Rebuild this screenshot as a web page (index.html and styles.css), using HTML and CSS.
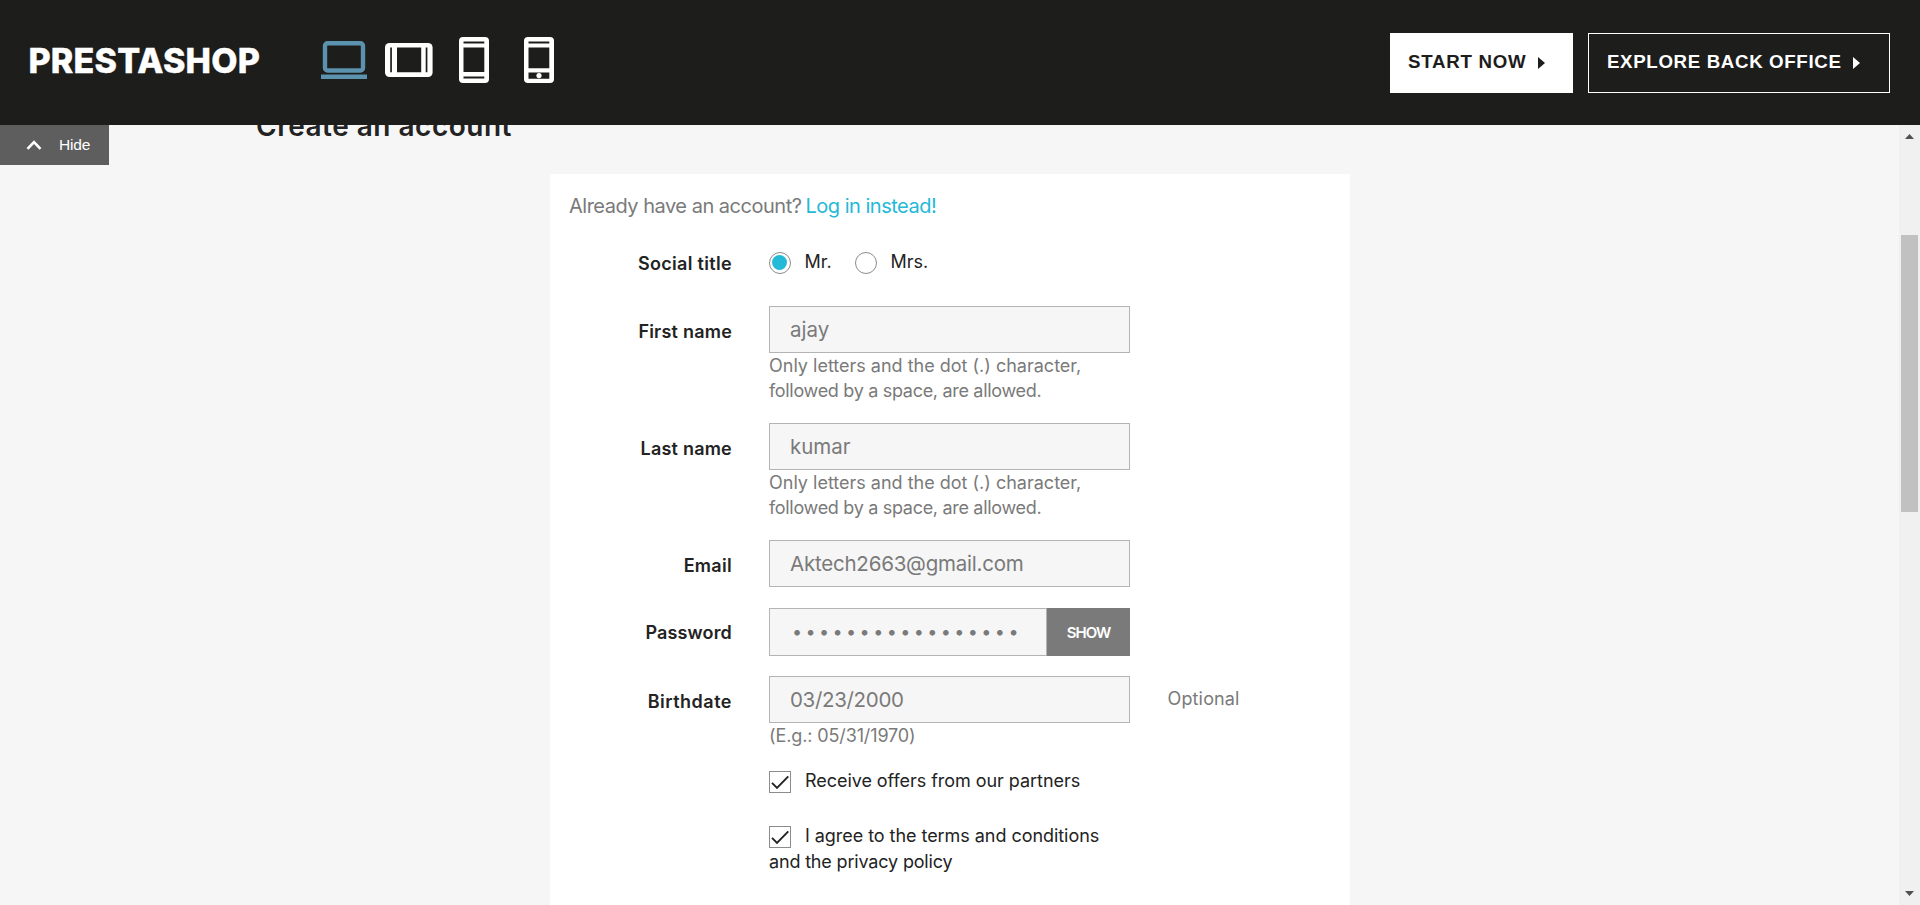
FILE: index.html
```html
<!DOCTYPE html>
<html lang="en">
<head>
<meta charset="utf-8">
<title>PrestaShop Demo</title>
<link rel="stylesheet" href="styles.css">
</head>
<body>
<header class="topbar">
  <div class="logo"><span>PRESTASHOP</span></div>
  <nav class="devices">
    <svg class="laptop" width="46" height="38" viewBox="0 0 46 38"><rect x="4" y="2.2" width="38" height="27.3" rx="2.5" fill="none" stroke="#5b93ae" stroke-width="4.4"/><path d="M0 33.4H46V38H0z" fill="#5b93ae"/></svg>
    <svg class="tablet" width="48" height="34" viewBox="0 0 48 34"><rect width="47.6" height="34" rx="4.5" fill="#fff"/><path d="M12 4.5H36.2V29.3H12zM5.2 4.5H6.9V29.3H5.2zM40.7 4.5H42.4V29.3H40.7z" fill="#1d1d1b"/></svg>
    <svg class="phone" width="30" height="46" viewBox="0 0 30 46"><rect width="30" height="46" rx="4" fill="#fff"/><path d="M4.5 4.5H25.3V6.4H4.5zM4.5 10.5H25.3V35H4.5zM4.5 39.6H25.3V41.5H4.5z" fill="#1d1d1b"/></svg>
    <svg class="phone" width="30" height="46" viewBox="0 0 30 46"><rect width="30" height="46" rx="4" fill="#fff"/><path d="M4.5 4.5H25.3V6.4H4.5zM4.5 10.5H25.3V31.2H4.5zM4.5 35.6H25.3V41.7H4.5z" fill="#1d1d1b"/><circle cx="15" cy="38.6" r="2.6" fill="#fff"/></svg>
  </nav>
  <div class="actions">
    <a class="btn btn-start"><span>START NOW</span><svg width="7" height="12" viewBox="0 0 7 12"><path d="M0 0L7 6L0 12z" fill="#1d1d1b"/></svg></a>
    <a class="btn btn-explore"><span>EXPLORE BACK OFFICE</span><svg width="7" height="12" viewBox="0 0 7 12"><path d="M0 0L7 6L0 12z" fill="#fff"/></svg></a>
  </div>
</header>
<div class="viewport">
  <div class="hide"><svg width="16" height="10" viewBox="0 0 16 10"><path d="M1.5 8.8L8 2.2L14.5 8.8" fill="none" stroke="#fff" stroke-width="2.6"/></svg><span>Hide</span></div>
  <main class="page">
    <h1 class="title"><span>Create an account</span></h1>
    <section class="card">
      <p class="login"><span class="have">Already have an account?</span><a class="log">Log in instead!</a></p>
      <form class="form">
        <div class="row social"><label class="label l-social">Social title</label>
          <div class="radios"><i class="radio on"></i><span class="mr">Mr.</span><i class="radio"></i><span class="mrs">Mrs.</span></div></div>
        <div class="row"><label class="label l-first">First name</label>
          <div><div class="input"><span class="v-ajay">ajay</span></div><div class="hint"><span class="h1a">Only letters and the dot (.) character,</span><br><span class="h1b">followed by a space, are allowed.</span></div></div></div>
        <div class="row"><label class="label l-last">Last name</label>
          <div><div class="input"><span class="v-kumar">kumar</span></div><div class="hint"><span class="h1a">Only letters and the dot (.) character,</span><br><span class="h1b">followed by a space, are allowed.</span></div></div></div>
        <div class="row"><label class="label l-email">Email</label>
          <div class="input"><span class="v-email">Aktech2663@gmail.com</span></div></div>
        <div class="row pass"><label class="label l-pass">Password</label>
          <div class="group"><div class="input"><span class="dots">•••••••••••••••••</span></div><button type="button" class="show"><span>SHOW</span></button></div></div>
        <div class="row"><label class="label l-birth">Birthdate</label>
          <div><div class="input"><span class="v-date">03/23/2000</span></div><div class="hint"><span class="eg">(E.g.: 05/31/1970)</span></div></div>
          <div class="optional"><span>Optional</span></div></div>
        <div class="row check"><i></i><div class="terms"><b class="box"><svg width="20" height="20" viewBox="0 0 20 20"><path d="M2 10.8L7 15.8L18.3 4.3" fill="none" stroke="#232323" stroke-width="1.9"/></svg></b><span class="c-offers">Receive offers from our partners</span></div></div>
        <div class="row check second"><i></i><div class="terms"><b class="box"><svg width="20" height="20" viewBox="0 0 20 20"><path d="M2 10.8L7 15.8L18.3 4.3" fill="none" stroke="#232323" stroke-width="1.9"/></svg></b><span class="c-agree">I agree to the terms and conditions</span><br><span class="c-priv">and the privacy policy</span></div></div>
      </form>
    </section>
  </main>
  <aside class="scroll"><svg width="9" height="5" viewBox="0 0 9 5"><path d="M0 5L4.5 0L9 5z" fill="#505050"/></svg><div class="thumb"></div><svg class="down" width="9" height="5" viewBox="0 0 9 5"><path d="M0 0H9L4.5 5z" fill="#505050"/></svg></aside>
</div>
</body>
</html>
```
FILE: styles.css
```css
* { box-sizing: border-box; }
body { margin: 0; width: 1920px; height: 905px; overflow: hidden; background: #f6f6f6; color: #232323; font-family: Inter, sans-serif; font-size: 18px; }
span, a { white-space: nowrap; }
.topbar { height: 125px; background: #1d1d1b; display: flex; padding: 0 30px 0 28px; }
.logo { width: 293px; padding: 40px 0 0 .5px; font-size: 34px; line-height: 41px; font-weight: 800; color: #fff; letter-spacing: .2px; -webkit-text-stroke: .4px #fff; }
.devices { display: flex; height: 120px; align-items: center; }
.devices svg { flex: none; }
.tablet { margin: 0 26px 0 18px; }
.phone + .phone { margin-left: 35px; }
.actions { margin-left: auto; display: flex; gap: 15px; padding-top: 33px; }
.btn { height: 60px; display: flex; align-items: center; border: 1px solid #fff; padding-left: 17px; font: bold 18.7px/58px "Liberation Sans", Arial, sans-serif; letter-spacing: .75px; }
.btn span { position: relative; top: -1px; }
.btn-start { width: 183px; background: #fff; color: #1d1d1b; }
.btn-explore { width: 302px; color: #fff; padding-left: 18px; letter-spacing: .65px; }
.btn svg { margin-left: 11.5px; }
.viewport { height: 780px; display: flex; position: relative; overflow: hidden; }
.hide { position: absolute; left: 0; top: 0; width: 109px; height: 40px; background: #5e5e5e; color: #fff; display: flex; align-items: center; padding-left: 26px; gap: 17px; font: 15.5px "Liberation Sans", Arial, sans-serif; letter-spacing: -.2px; }
.page { width: 1899px; }
.title { margin: -16px 0 0 256px; height: 65px; font-size: 28px; line-height: 34px; font-weight: 600; letter-spacing: .5px; }
.card { margin-left: 550px; width: 800px; height: 731px; background: #fff; padding: 17px 20px 0 19px; }
.login { margin: 0; line-height: 31px; height: 60px; font-size: 20px; color: #7a7a7a; display: flex; gap: 4px; letter-spacing: -.49px; }
.log { color: #24b9d7; }
.form { display: flex; flex-direction: column; padding-left: 1px; }
.row { display: grid; grid-template-columns: 162px 361px auto; column-gap: 37px; margin-bottom: 20px; }
.social { height: 35px; }
.label { text-align: right; font-weight: 600; line-height: 47px; padding-top: 2px; height: 47px; white-space: nowrap; }
.social .label { line-height: 24px; height: 26px; padding-top: 1px; }
.l-social { letter-spacing: .32px; }
.l-first, .l-last { letter-spacing: .22px; }
.l-email { letter-spacing: .3px; }
.l-pass { letter-spacing: .15px; }
.l-birth { letter-spacing: .5px; }
.pass .label { padding-top: 1px; }
.radios { display: flex; height: 24px; line-height: 23px; align-items: center; }
.radio { width: 22px; height: 22px; border: 1px solid #8c8c8c; border-radius: 50%; padding: 2px; }
.radio.on::before { content: ""; display: block; width: 15px; height: 15px; border-radius: 50%; background: #24b9d7; }
.radios span { margin: -3px 0 0 13.5px; }
.radios .mr { width: 50.5px; }
.input { height: 47px; border: 1px solid #b4b4b4; background: #f6f6f6; color: #7a7a7a; padding-left: 20px; font-size: 20.5px; line-height: 45px; }
.v-email { letter-spacing: -.22px; }
.v-date { letter-spacing: -.32px; }
.hint { color: #7a7a7a; line-height: 25px; }
.h1b { letter-spacing: -.31px; }
.eg { letter-spacing: -.12px; }
.row:nth-child(4) { margin-bottom: 21px; }
.group { display: flex; height: 48px; }
.group .input { width: 278px; height: 48px; padding: 0 16px 0 22px; font-size: 18px; }
.dots { letter-spacing: 3.4px; }
.show { border: 0; padding: 0; width: 83px; height: 48px; background: #7a7a7a; color: #fff; font: 600 15px Inter, sans-serif; letter-spacing: -.95px; }
.optional { color: #7a7a7a; line-height: 45px; padding-left: .5px; letter-spacing: .15px; }
.check { margin-bottom: 0; height: 55px; line-height: 26px; }
.terms { white-space: nowrap; letter-spacing: -.05px; }
.c-priv { letter-spacing: -.17px; }
.box { display: inline-block; vertical-align: top; width: 22px; height: 22px; border: 1px solid #8c8c8c; margin: 3px 14px -3px 0; line-height: 0; }
.scroll { width: 21px; flex: none; background: #f0f0f0; display: flex; flex-direction: column; align-items: center; padding: 9px 1px 9px 0; }
.scroll svg { flex: none; }
.thumb { width: 17px; height: 277px; background: #c1c1c1; margin-top: 96px; }
.down { margin-top: auto; }
```
